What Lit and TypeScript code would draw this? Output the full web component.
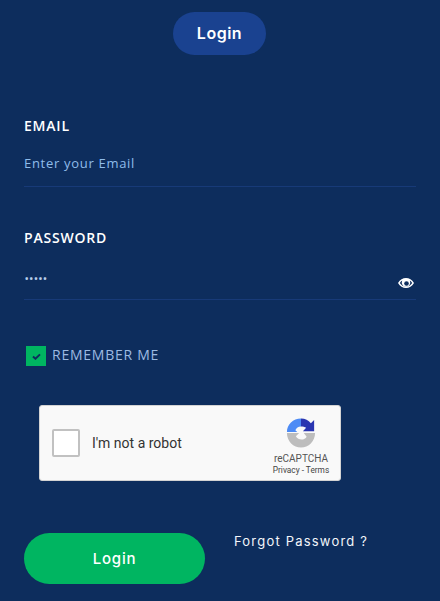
import { LitElement, html, css } from "lit";
import { customElement } from "lit/decorators.js";

@customElement("app-root")
export class AppRoot extends LitElement {
  static styles = css`
    :host { display: block; width: 440px; height: 601px; overflow: hidden; background: #0d2d5d; font-family: "Open Sans", sans-serif; }
    .page { display: flex; flex-direction: column; padding: 12px 24px 0; box-sizing: border-box; height: 601px; }
    .tab { align-self: center; margin-right: 1px; width: 93px; height: 43px; border-radius: 22px; background: #1a4290; color: #fff; font: 600 16px/43px Inter, "Open Sans", sans-serif; text-align: center; letter-spacing: 0.5px; }
    .field { display: flex; flex-direction: column; }
    .email { margin-top: 61px; }
    .password { margin-top: 41px; }
    .label { color: #fff; font-size: 14px; font-weight: 600; line-height: 19px; letter-spacing: 0.8px; }
    .input { display: flex; justify-content: space-between; height: 51px; border-bottom: 1px solid #173a78; position: relative; }
    .password .input { height: 52px; }
    .ph { color: #8fbcea; font-size: 13px; letter-spacing: 0.7px; line-height: 18px; margin-top: 19px; }
    .dots { color: #b9cfea; font-size: 9px; letter-spacing: 1.2px; line-height: 18px; margin-top: 23px; margin-left: 1px; font-weight: 700; }
    .eye { width: 16px; height: 16px; margin: 28px 2px 0 0; }
    .remember { display: flex; align-items: flex-start; gap: 6px; height: 20px; margin: 46px 0 0 2px; }
    .check { width: 20px; height: 20px; background: #00b561; display: flex; align-items: center; justify-content: center; }
    .remember span { color: #9dbae2; font-size: 14px; line-height: 20px; letter-spacing: 0.75px; margin-top: -1px; }
    .captcha { margin: 39px 0 0 15px; width: 302px; height: 76px; box-sizing: border-box; background: #f9f9f9; border: 1px solid #d3d3d3; border-radius: 3px; display: flex; align-items: center; font-family: Roboto, sans-serif; }
    .box { width: 28px; height: 28px; box-sizing: border-box; background: #fff; border: 2px solid #c1c1c1; border-radius: 2px; margin-left: 12px; }
    .robot { margin-left: 12px; font-size: 14px; color: #333; flex: 1; }
    .brand { width: 70px; margin-right: 4px; align-self: stretch; padding-top: 12px; box-sizing: border-box; display: flex; flex-direction: column; align-items: center; color: #555; }
    .brand svg { margin-left: -1px; }
    .brand .n { font-size: 10px; line-height: 12px; margin-top: 5px; }
    .brand .t { font-size: 8.300px; line-height: 10px; color: #444; white-space: nowrap; }
    .actions { display: flex; align-items: flex-start; gap: 29px; margin-top: 52px; }
    .go { width: 181px; height: 51px; border-radius: 26px; background: #00b561; color: #fff; font: 500 15px/51px Inter, "Open Sans", sans-serif; letter-spacing: 0.8px; text-align: center; }
    .forgot { color: #f2f5fa; font: 400 13px/18px Inter, "Open Sans", sans-serif; letter-spacing: 1.2px; margin-top: -1px; }
  `;

  render() {
    return html`<div class="page">
      <div class="tab">Login</div>
      <div class="field email">
        <div class="label">EMAIL</div>
        <div class="input"><span class="ph">Enter your Email</span></div>
      </div>
      <div class="field password">
        <div class="label">PASSWORD</div>
        <div class="input">
          <span class="dots">•••••</span>
          <svg class="eye" viewBox="0 0 16 16"><path fill="#fff" fill-rule="evenodd" d="M0 8C2 4.600 4.800 3 8 3s6 1.600 8 5c-2 3.400-4.800 5-8 5S2 11.400 0 8Zm1.800 0C3.400 10.400 5.500 11.700 8 11.700s4.600-1.300 6.200-3.700C13.500 7 12.700 6.200 11.800 5.600a4.200 4.200 0 1 1-7.600 0C3.300 6.200 2.500 7 1.800 8Z"/><path fill="#fff" d="M8 4.500a3.500 3.500 0 1 0 0 7 3.500 3.500 0 0 0 0-7Z" opacity=".95"/><circle cx="8.500" cy="8.500" r="2.300" fill="#0d2d5d"/></svg>
        </div>
      </div>
      <div class="remember">
        <div class="check"><svg width="9" height="7" viewBox="0 0 10 8"><path d="M1 4l2.800 2.600L9 1.500" fill="none" stroke="#0d2d5d" stroke-width="2.200"/></svg></div>
        <span>REMEMBER ME</span>
      </div>
      <div class="captcha">
        <div class="box"></div>
        <div class="robot">I'm not a robot</div>
        <div class="brand">
          <svg width="30" height="30" viewBox="0 0 32 32">
            <path fill="#4d8bf5" d="M1 15C1 7 7.500 .5 16 .5V9C13 9 11 10.500 10 13L12 15Z"/>
            <path fill="#2a36b1" d="M16 .5C20.500 .5 24 2.500 26.500 5.500L30 2V14H18L21.500 10.500C20 9.500 18 9 16 9Z"/>
            <path fill="#bdbdbd" d="M1 16H14L10.500 19.500C12 22 14 23 16.500 23C19 23 21 22 22 20L19 16H31C31 25 24 31.500 16 31.500C8 31.500 1 25 1 16Z"/>
          </svg>
          <div class="n">reCAPTCHA</div>
          <div class="t">Privacy - Terms</div>
        </div>
      </div>
      <div class="actions">
        <div class="go">Login</div>
        <div class="forgot">Forgot Password ?</div>
      </div>
    </div>`;
  }
}
